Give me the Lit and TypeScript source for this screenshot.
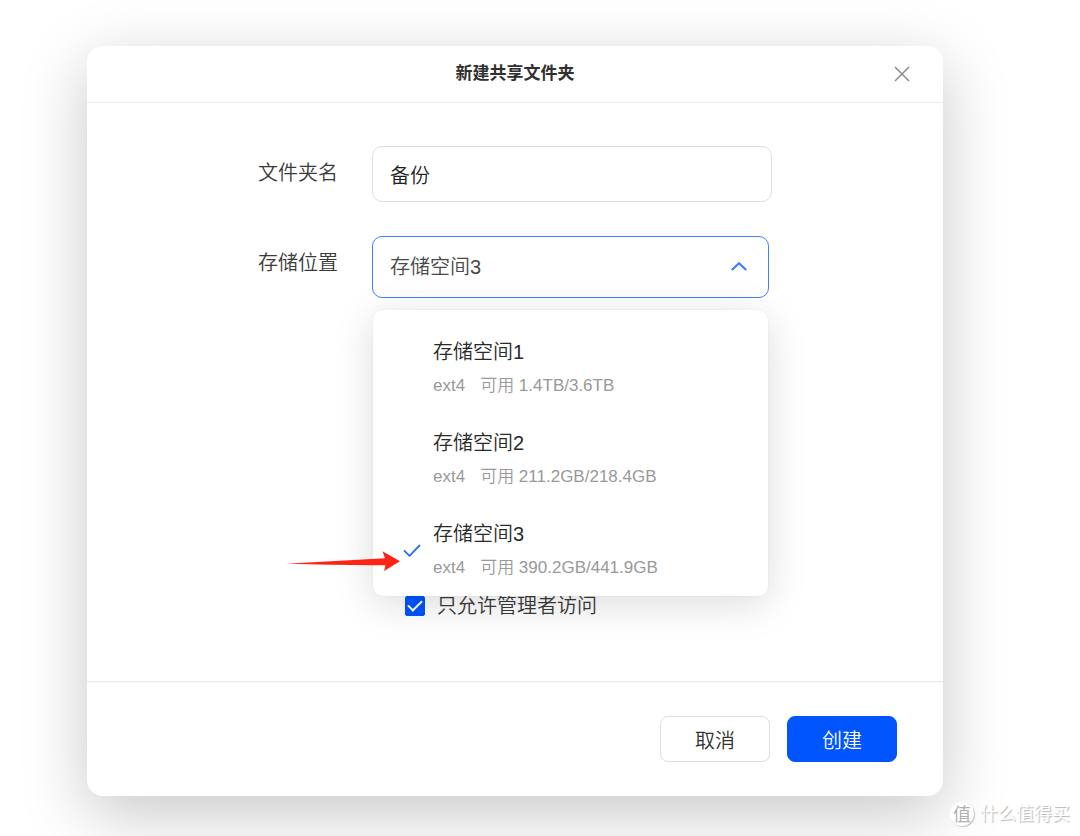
import { LitElement, html, css, svg } from "lit";
import { customElement, state } from "lit/decorators.js";

interface Volume {
  id: string;
  name: string;
  fs: string;
  usage: string;
}

const VOLUMES: Volume[] = [
  { id: "1", name: "存储空间1", fs: "ext4", usage: "可用 1.4TB/3.6TB" },
  { id: "2", name: "存储空间2", fs: "ext4", usage: "可用 211.2GB/218.4GB" },
  { id: "3", name: "存储空间3", fs: "ext4", usage: "可用 390.2GB/441.9GB" },
];

const check = svg`<path d="M1 7.4 L6.5 12.8 L17 2" />`;

@customElement("app-root")
export class AppRoot extends LitElement {
  static styles = css`
    :host {
      display: block;
      box-sizing: border-box;
      position: relative;
      min-height: 100vh;
      overflow: hidden;
      padding: 46px 137px 40px 87px;
      background: #fff;
      color: #3a3a3a;
      font-family: "Liberation Sans", "Noto Sans CJK SC", sans-serif;
      font-size: 20px;
      font-weight: 350;
    }
    *,
    *::before {
      box-sizing: border-box;
    }
    .dialog {
      display: flex;
      flex-direction: column;
      background: #fff;
      border-radius: 16px;
      box-shadow: 0 18px 66px rgba(0, 0, 0, 0.22);
    }
    .header {
      display: grid;
      grid-template-columns: 1fr auto 1fr;
      align-items: center;
      padding: 12px 29px;
      border-bottom: 1px solid #ebebeb;
    }
    .title {
      grid-column: 2;
      margin: 0;
      font-size: 17px;
      line-height: 32px;
      font-weight: 700;
      color: #303030;
    }
    .close {
      justify-self: end;
      display: grid;
      place-items: center;
      width: 24px;
      height: 24px;
      padding: 0;
      border: 0;
      background: none;
    }
    .close svg {
      width: 16px;
      height: 16px;
      fill: none;
      stroke: #8c8c8c;
      stroke-width: 1.5;
    }
    .body {
      display: flex;
      flex-direction: column;
      gap: 34px;
      min-height: 578px;
      padding: 43px 171px 61px;
    }
    .row {
      display: grid;
      grid-template-columns: 80px 1fr;
      column-gap: 34px;
      align-items: start;
    }
    .label {
      line-height: 54px;
      white-space: nowrap;
    }
    .control {
      position: relative;
    }
    .picker {
      margin-right: 3px;
    }
    .text,
    .select {
      display: block;
      width: 100%;
      margin: 0;
      padding: 0 17px;
      border: 1px solid #dedede;
      border-radius: 10px;
      outline: 0;
      background: #fff;
      color: #1f1f1f;
      font: inherit;
    }
    .text {
      height: 56px;
    }
    .select {
      height: 62px;
      appearance: none;
      border-color: #4080ff;
      color: #484848;
    }
    .chevron {
      position: absolute;
      right: 21px;
      top: 24px;
      width: 18px;
      height: 14px;
      fill: none;
      stroke: #3d7dff;
      stroke-width: 2.2;
      pointer-events: none;
    }
    .menu {
      position: absolute;
      z-index: 1;
      top: calc(100% + 12px);
      left: 1px;
      right: 1px;
      display: flex;
      flex-direction: column;
      gap: 30px;
      padding: 27px 30px 16px;
      border-radius: 10px;
      background: #fff;
      box-shadow: 0 8px 40px rgba(0, 0, 0, 0.14), 0 0 2px rgba(0, 0, 0, 0.08);
    }
    .option {
      display: grid;
      grid-template-columns: 18px 1fr;
      column-gap: 12px;
      align-items: center;
      padding: 0;
      border: 0;
      background: none;
      color: inherit;
      font: inherit;
      text-align: left;
    }
    .tick {
      width: 18px;
      height: 14px;
      fill: none;
      stroke: #2d6bff;
      stroke-width: 1.8;
    }
    .info {
      grid-column: 2;
      display: grid;
      gap: 7px;
    }
    .name {
      line-height: 30px;
      color: #2a2a2a;
    }
    .meta {
      display: flex;
      gap: 15px;
      font-size: 17px;
      line-height: 24px;
      color: #999;
    }
    .admin {
      display: flex;
      align-items: center;
      gap: 12px;
      margin-top: auto;
      padding-left: 147px;
      line-height: 28px;
    }
    .box {
      appearance: none;
      display: grid;
      place-items: center;
      width: 20px;
      height: 20px;
      margin: 0;
      border: 1px solid #c8c8c8;
      border-radius: 2px;
    }
    .box:checked {
      border-color: #0055ff;
      background: #0055ff;
    }
    .box:checked::before {
      content: "";
      width: 14px;
      height: 8px;
      border: solid #fff;
      border-width: 0 0 2px 2px;
      transform: translateY(-2px) rotate(-45deg);
    }
    .footer {
      display: flex;
      justify-content: flex-end;
      gap: 17px;
      padding: 34px 46px;
      border-top: 1px solid #e6e6e6;
    }
    .btn {
      width: 110px;
      height: 46px;
      padding: 0;
      border: 1px solid #dedede;
      border-radius: 8px;
      background: #fff;
      color: #333;
      font: inherit;
    }
    .primary {
      border-color: #0055ff;
      background: #0055ff;
      color: #fff;
    }
    .arrow {
      position: absolute;
      z-index: 2;
      left: -86px;
      top: 315px;
      width: 114px;
      height: 20px;
      fill: #ff2316;
      pointer-events: none;
    }
    .mark {
      position: absolute;
      right: 10px;
      bottom: 9px;
      display: flex;
      align-items: center;
      gap: 6px;
      font-size: 18px;
      line-height: 26px;
      font-weight: 400;
      color: #fff;
      text-shadow: 1px 1px 1px #b4b4b4;
    }
    .seal {
      display: grid;
      place-items: center;
      width: 24px;
      height: 24px;
      border-radius: 50%;
      background: #fff;
      box-shadow: 1px 1px 1px #c4c4c4;
      color: #b0b0b0;
      text-shadow: none;
    }
  `;

  @state() private volume = "3";
  @state() private open = true;

  private pick(id: string) {
    this.volume = id;
    this.open = false;
  }

  private toggle(e: Event) {
    e.preventDefault();
    this.open = !this.open;
  }

  private renderOption(v: Volume) {
    const selected = v.id === this.volume;
    return html`<button
      class="option"
      type="button"
      role="option"
      aria-selected=${selected ? "true" : "false"}
      @click=${() => this.pick(v.id)}
    >
      ${selected ? html`<svg class="tick" viewBox="0 0 18 14">${check}</svg>` : null}
      <span class="info">
        <span class="name">${v.name}</span>
        <span class="meta"><span>${v.fs}</span><span>${v.usage}</span></span>
      </span>
    </button>`;
  }

  render() {
    return html`
      <form class="dialog" role="dialog" aria-labelledby="title" @submit=${(e: Event) => e.preventDefault()}>
        <header class="header">
          <h1 class="title" id="title">新建共享文件夹</h1>
          <button class="close" type="button" aria-label="关闭">
            <svg viewBox="0 0 16 16"><path d="M1 1 L15 15 M15 1 L1 15" /></svg>
          </button>
        </header>
        <div class="body">
          <div class="row">
            <label class="label" for="folder">文件夹名</label>
            <div class="control"><input class="text" id="folder" type="text" value="备份" /></div>
          </div>
          <div class="row">
            <label class="label" for="volume">存储位置</label>
            <div class="control picker">
              <select class="select" id="volume" @mousedown=${this.toggle}>
                ${VOLUMES.map(
                  (v) => html`<option value=${v.id} ?selected=${v.id === this.volume}>${v.name}</option>`
                )}
              </select>
              <svg class="chevron" viewBox="0 0 18 14"><path d="M1.8 10 L9 3.2 L16.2 10" /></svg>
              ${this.open
                ? html`<div class="menu" role="listbox" aria-label="存储位置">
                    ${VOLUMES.map((v) => this.renderOption(v))}
                  </div>`
                : null}
              <svg class="arrow" viewBox="0 0 114 20">
                <path d="M0 12.8 L99 7.3 L96.5 0.3 L114 10.3 L98 20 L99.5 14.2 Q50 14.4 0 12.8 Z" />
              </svg>
            </div>
          </div>
          <div class="admin">
            <input class="box" id="admin" type="checkbox" checked />
            <label for="admin">只允许管理者访问</label>
          </div>
        </div>
        <footer class="footer">
          <button class="btn" type="button">取消</button>
          <button class="btn primary" type="submit">创建</button>
        </footer>
      </form>
      <div class="mark"><span class="seal">值</span><span>什么值得买</span></div>
    `;
  }
}
